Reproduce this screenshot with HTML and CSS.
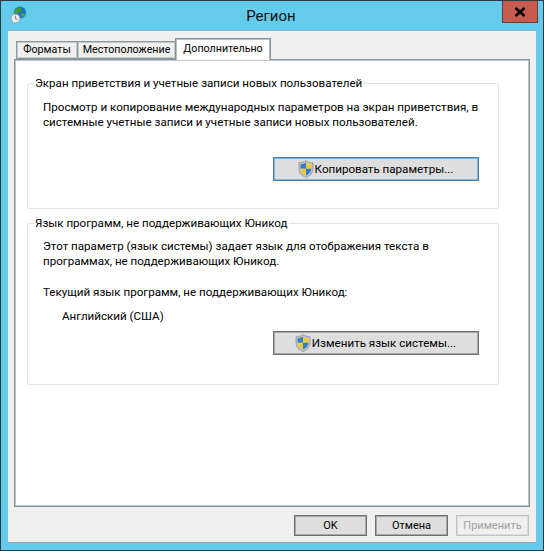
FILE: index.html
```html
<!DOCTYPE html>
<html lang="ru">
<head>
  <meta charset="UTF-8" />
  <title>Регион</title>
  <link rel="stylesheet" href="styles.css">
</head>
<body>
  <svg class="svg-defs" width="0" height="0">
    <defs>
      <symbol id="shield" viewBox="0 0 18 18">
        <path d="M9 .5c2 1.600 4.400 2.200 7 2.400v6c0 4-3 6.800-7 8.600-4-1.800-7-4.600-7-8.600v-6C4.600 2.700 7 2.100 9 .5z" fill="#c3c6c9" stroke="#8a9096" stroke-width=".8"/>
        <path d="M9 2.400v6.400H3.600V4.300C5.600 4.100 7.500 3.500 9 2.400z" fill="#2a7fd0"/>
        <path d="M9 2.400c1.500 1.100 3.400 1.700 5.400 1.900v4.500H9z" fill="#f4c92f"/>
        <path d="M3.600 8.800H9v6.800C6 14.100 3.800 12 3.600 8.800z" fill="#f4c92f"/>
        <path d="M9 8.800h5.400c-.2 3.200-2.400 5.300-5.400 6.800z" fill="#2a7fd0"/>
      </symbol>
    </defs>
  </svg>

  <div class="window">
    <div class="titlebar">
      <svg class="app-icon" width="18" height="18" viewBox="0 0 18 18">
        <circle cx="10" cy="6.500" r="6" fill="#1f6fc0"/>
        <path d="M6.500 2.500c2-1.500 4.500-1 5 .5s-1 3-3 3.500-2 2.500-3.500 1.500S5 3.500 6.500 2.500z" fill="#3f9e35"/>
        <path d="M11.500 7.500c1.500-.5 3.500 0 3.500 1s-1.500 2.500-2.500 2.500-2-3-1-3.500z" fill="#4cab3c"/>
        <circle cx="5.500" cy="12.500" r="4.500" fill="#e6e9eb" stroke="#8f989d" stroke-width=".8"/>
        <path d="M5.500 9.500v3.200l2 .8" fill="none" stroke="#6d767c" stroke-width=".8"/>
      </svg>
      <div class="title">Регион</div>
      <div class="close-btn">
        <svg width="12" height="10" viewBox="0 0 12 10"><path d="M1.500 1l9 8M10.500 1l-9 8" stroke="#000" stroke-width="2.400" fill="none"/></svg>
      </div>
    </div>

    <div class="client">
      <div class="tabs">
        <div class="tab">Форматы</div>
        <div class="tab tab-location">Местоположение</div>
        <div class="tab active">Дополнительно</div>
      </div>

      <div class="panel">
        <fieldset class="group group-welcome">
          <legend>Экран приветствия и учетные записи новых пользователей</legend>
          <p>Просмотр и копирование международных параметров на экран приветствия, в системные учетные записи и учетные записи новых пользователей.</p>
          <div class="group-action">
            <button class="btn btn-wide btn-default"><svg class="shield"><use href="#shield"/></svg>Копировать параметры...</button>
          </div>
        </fieldset>

        <fieldset class="group group-language">
          <legend>Язык программ, не поддерживающих Юникод</legend>
          <p>Этот параметр (язык системы) задает язык для отображения текста в программах, не поддерживающих Юникод.</p>
          <p class="current-label">Текущий язык программ, не поддерживающих Юникод:</p>
          <p class="current-value">Английский (США)</p>
          <div class="group-action">
            <button class="btn btn-wide"><svg class="shield"><use href="#shield"/></svg>Изменить язык системы...</button>
          </div>
        </fieldset>
      </div>

      <div class="dialog-buttons">
        <button class="btn btn-small">OK</button>
        <button class="btn btn-small">Отмена</button>
        <button class="btn btn-small" disabled>Применить</button>
      </div>
    </div>
  </div>
</body>
</html>
```

FILE: styles.css
```css
html, body {
  margin: 0;
  padding: 0;
}

body {
  font-family: Roboto, "Open Sans", sans-serif;
  font-size: 11.6px;
  color: #000;
}

.svg-defs {
  display: block;
  height: 0;
}

.window {
  box-sizing: border-box;
  width: 544px;
  height: 551px;
  background-color: #63cbeb;
  border: 1px solid #2f3b43;
  display: flex;
  flex-direction: column;
}

.titlebar {
  height: 29px;
  display: flex;
  align-items: flex-start;
  padding-left: 9px;
  flex: none;
}

.app-icon {
  margin-top: 5px;
  flex: none;
}

.title {
  flex: 1;
  text-align: center;
  font-size: 15px;
  line-height: 20px;
  margin-top: 5px;
  padding-left: 12px;
  color: #111;
}

.close-btn {
  width: 34px;
  height: 21px;
  margin-right: 5px;
  background-color: #c75b50;
  border: 1px solid #6b3a36;
  border-top: none;
  box-sizing: content-box;
  display: flex;
  align-items: center;
  justify-content: center;
}

.client {
  flex: 1;
  margin: 0 7px 7px;
  background-color: #f0f0f0;
  border-top: 1px solid #8fb4c8;
  border-bottom: 1px solid #9aa7ad;
  padding: 7px 6px 0;
  display: flex;
  flex-direction: column;
}

.tabs {
  display: flex;
  height: 21px;
  padding-left: 2px;
  align-items: flex-end;
  position: relative;
  z-index: 1;
}

.tab {
  box-sizing: border-box;
  height: 18px;
  font-size: 10.7px;
  line-height: 16px;
  width: 62px;
  text-align: center;
  background-color: #f0f0f0;
  border: 1px solid #8f989e;
  box-shadow: inset 0 0 0 1px #c4c9cc;
  margin-right: -1px;
  white-space: nowrap;
}

.tab-location {
  width: 99px;
}

.tab.active {
  width: 96px;
  height: 22px;
  line-height: 20px;
  background-color: #fff;
  border-color: #87939a;
  box-shadow: inset 1px 1px 0 #b8c0c5, inset -1px 0 0 #b8c0c5;
  border-bottom: none;
  margin-bottom: -1px;
  margin-right: 0;
}

.panel {
  box-sizing: border-box;
  height: 448px;
  background-color: #fff;
  border: 1px solid #87939a;
  box-shadow: inset 0 0 0 1px #c0c7cb;
  padding: 15px 30px 0 12px;
}

.group {
  box-sizing: border-box;
  margin: 0 0 6px;
  padding: 0 5px 0 15px;
  border: 1px solid #dce4ea;
  border-radius: 3px;
}

.group-welcome {
  height: 134px;
}

.group-language {
  height: 170px;
}

.group legend {
  margin-left: -9px;
  padding: 0 1px;
  line-height: 16px;
}

.group p {
  margin: 0;
  line-height: 15px;
}

.group-welcome p {
  margin-top: 9px;
}

.group-language p:first-of-type {
  margin-top: 8px;
}

.group .current-label {
  margin-top: 16px;
}

.group .current-value {
  margin-top: 9px;
  padding-left: 19px;
}

.group-action {
  display: flex;
  justify-content: flex-end;
  padding-right: 14px;
}

.group-welcome .group-action {
  margin-top: 27px;
}

.group-language .group-action {
  margin-top: 7px;
}

.btn {
  box-sizing: border-box;
  font-family: inherit;
  font-size: 11.6px;
  color: #000;
  background-color: #dedede;
  border: 1px solid #6f6f6f;
  box-shadow: inset 0 0 0 1px #a8a8a8;
  padding: 0;
  display: flex;
  align-items: center;
  justify-content: center;
}

.btn-wide {
  width: 206px;
  height: 24px;
  padding-right: 2px;
}

.btn-default {
  border-color: #3e80b4;
  box-shadow: inset 0 0 0 1px #8db3d2;
}

.btn-small {
  width: 73px;
  height: 21px;
  font-size: 11px;
}

.btn:disabled {
  background-color: #f0f0f0;
  border-color: #c0c0c8;
  box-shadow: inset 0 0 0 1px #dcdce0;
  color: #a0a0a0;
}

.shield {
  width: 18px;
  height: 18px;
}

.dialog-buttons {
  display: flex;
  justify-content: flex-end;
  gap: 8px;
  margin-top: 8px;
  padding-right: 1px;
}
```
